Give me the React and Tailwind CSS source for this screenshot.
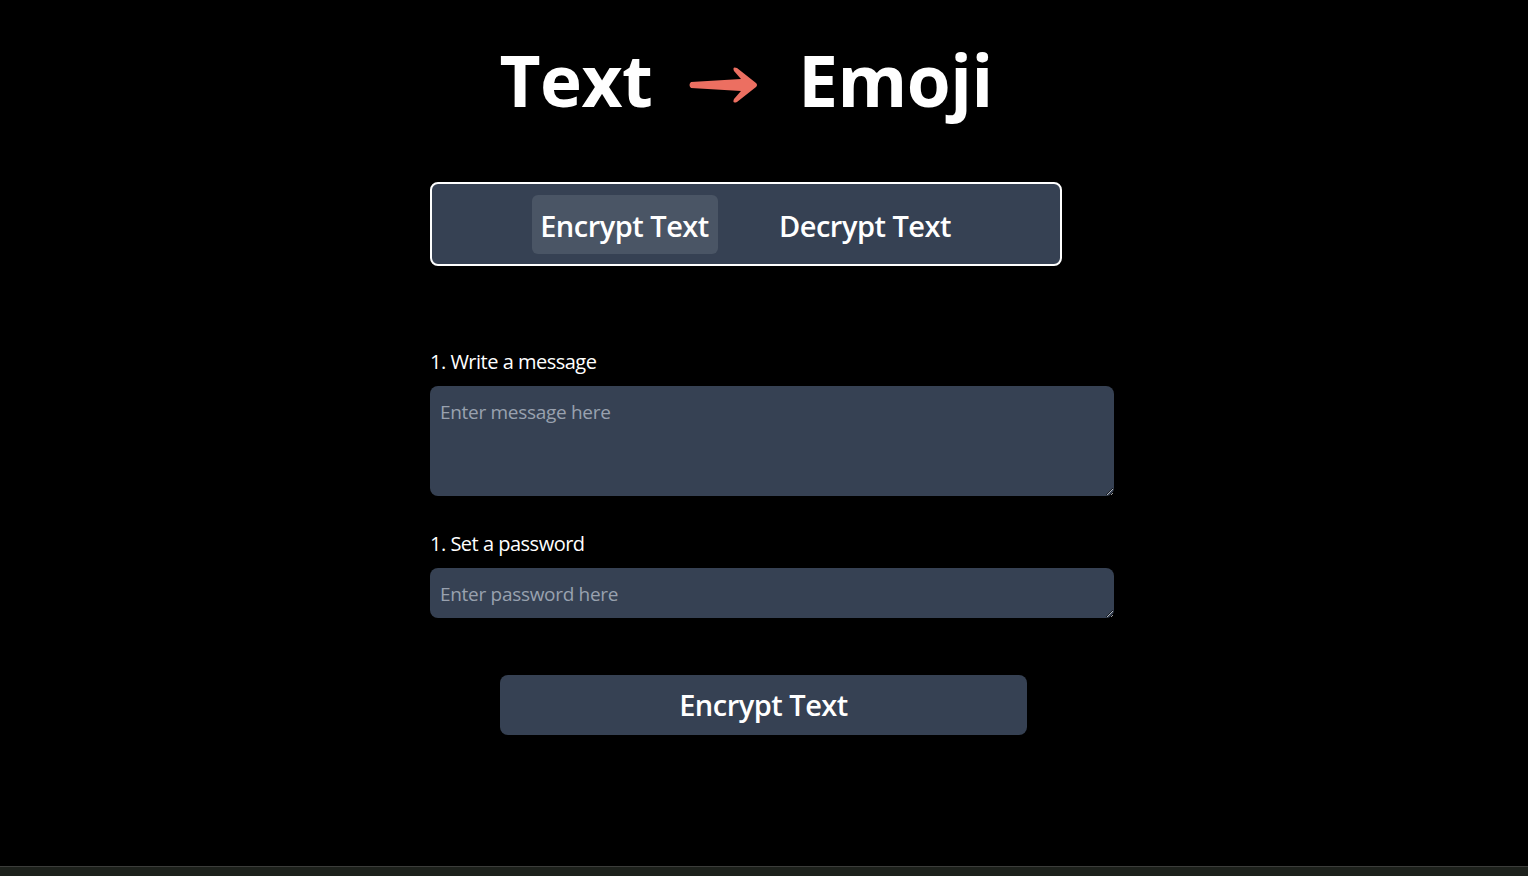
import React, { useState } from 'react';

const Arrow = () => (
    <svg width="72" height="40" viewBox="0 0 72 40" className="ml-[36px] mr-[38px] mt-[10px]">
        <path
            d="M3 17 Q0 20 3 23 L53 26 L46 34 Q44 39 49 37 L68 22 Q70 20 68 18 L49 3 Q44 1 46 6 L53 14 Z"
            fill="#ec6f61"
        />
    </svg>
);

const App = () => {
    const [mode, setMode] = useState('encrypt');
    const [message, setMessage] = useState('');
    const [password, setPassword] = useState('');

    return (
        <div className="w-full h-[876px] bg-black text-white flex flex-col" style={{ fontFamily: '"Open Sans", "Noto Sans", sans-serif' }}>
            <main className="flex-1 pl-[430px] pt-[44px]">
                <div className="w-[684px]">
                    {/* Header */}
                    <div className="w-[632px] flex items-center justify-center">
                        <h1 className="text-[71px] leading-[72px] font-bold tracking-[-0.5px]">Text</h1>
                        <Arrow />
                        <h1 className="text-[71px] leading-[72px] font-bold tracking-[-0.5px]">Emoji</h1>
                    </div>

                    {/* Mode tabs */}
                    <div className="mt-[66px] w-[632px] h-[84px] border-2 border-white rounded-lg bg-gray-700 flex items-center justify-center gap-[52px]">
                        <button
                            onClick={() => setMode('encrypt')}
                            className={`w-[186px] h-[59px] rounded-md text-[29px] leading-[40px] pt-[3px] font-semibold tracking-[-0.5px] ${mode === 'encrypt' ? 'bg-gray-600' : ''}`}
                        >
                            Encrypt Text
                        </button>
                        <button
                            onClick={() => setMode('decrypt')}
                            className={`w-[191px] h-[59px] rounded-md text-[29px] leading-[40px] pt-[3px] font-semibold tracking-[-0.5px] ${mode === 'decrypt' ? 'bg-gray-600' : ''}`}
                        >
                            Decrypt Text
                        </button>
                    </div>

                    {/* Form */}
                    <label htmlFor="message" className="block mt-[82px] text-[20px] leading-[28px] tracking-[-0.5px]">1. Write a message</label>
                    <textarea
                        id="message"
                        value={message}
                        onChange={(e) => setMessage(e.target.value)}
                        placeholder="Enter message here"
                        className="block mt-[10px] w-[684px] h-[110px] px-[10px] pt-[12px] pb-[10px] rounded-lg bg-gray-700 text-[19px] leading-[28px] tracking-[-0.3px] placeholder-gray-400 outline-none"
                    />

                    <label htmlFor="password" className="block mt-[34px] text-[20px] leading-[28px] tracking-[-0.5px]">1. Set a password</label>
                    <textarea
                        id="password"
                        rows={1}
                        value={password}
                        onChange={(e) => setPassword(e.target.value)}
                        placeholder="Enter password here"
                        className="block mt-[10px] w-[684px] h-[50px] px-[10px] pt-[12px] pb-[10px] rounded-lg bg-gray-700 text-[19px] leading-[28px] tracking-[-0.3px] placeholder-gray-400 outline-none"
                    />

                    <button className="block mt-[57px] ml-[70px] w-[527px] h-[60px] rounded-lg bg-gray-700 text-[29px] leading-[40px] font-semibold tracking-[-0.5px]">
                        {mode === 'encrypt' ? 'Encrypt Text' : 'Decrypt Text'}
                    </button>
                </div>
            </main>
            <div className="h-[10px] border-t border-[#3c3d3b] bg-[#1d211c]" />
        </div>
    );
};

export default App;
